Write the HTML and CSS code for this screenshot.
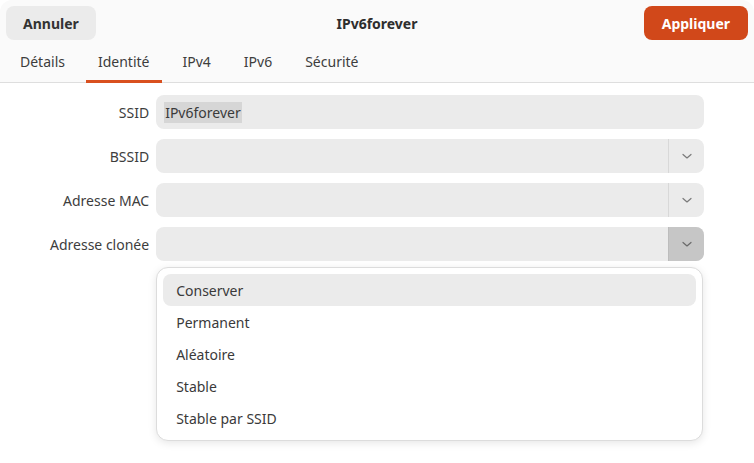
FILE: index.html
```html
<!DOCTYPE html>
<html lang="fr">
<head>
    <meta charset="UTF-8">
    <meta name="viewport" content="width=device-width, initial-scale=1.0">
    <title>IPv6forever</title>
    <link rel="stylesheet" href="styles.css">
</head>
<body>
    <div class="window">
        <div class="header">
            <div class="headerbar">
                <button class="btn btn-cancel">Annuler</button>
                <span class="title">IPv6forever</span>
                <button class="btn btn-apply">Appliquer</button>
            </div>
            <div class="tabs">
                <span class="tab">Détails</span>
                <span class="tab active">Identité</span>
                <span class="tab">IPv4</span>
                <span class="tab">IPv6</span>
                <span class="tab">Sécurité</span>
            </div>
        </div>

        <div class="form">
            <label class="label">SSID</label>
            <div class="field"><span class="selected">IPv6forever</span></div>

            <label class="label">BSSID</label>
            <div class="combo">
                <div class="combo-entry"></div>
                <div class="combo-btn">
                    <svg width="14" height="14" viewBox="0 0 14 14"><path d="M3 5.5 L7 9 L11 5.5" fill="none" stroke="#7a7a7a" stroke-width="1.2" stroke-linecap="round" stroke-linejoin="round"/></svg>
                </div>
            </div>

            <label class="label">Adresse MAC</label>
            <div class="combo">
                <div class="combo-entry"></div>
                <div class="combo-btn">
                    <svg width="14" height="14" viewBox="0 0 14 14"><path d="M3 5.5 L7 9 L11 5.5" fill="none" stroke="#7a7a7a" stroke-width="1.2" stroke-linecap="round" stroke-linejoin="round"/></svg>
                </div>
            </div>

            <label class="label">Adresse clonée</label>
            <div class="combo open">
                <div class="combo-entry"></div>
                <div class="combo-btn">
                    <svg width="14" height="14" viewBox="0 0 14 14"><path d="M3 5.5 L7 9 L11 5.5" fill="none" stroke="#6a6a6a" stroke-width="1.2" stroke-linecap="round" stroke-linejoin="round"/></svg>
                </div>
                <ul class="menu">
                    <li class="item hover">Conserver</li>
                    <li class="item">Permanent</li>
                    <li class="item">Aléatoire</li>
                    <li class="item">Stable</li>
                    <li class="item">Stable par SSID</li>
                </ul>
            </div>
        </div>
    </div>
</body>
</html>
```

FILE: styles.css
```css
body {
    margin: 0;
    background-color: #fff;
    font-family: "Noto Sans", "DejaVu Sans", sans-serif;
    font-size: 14px;
    color: #3a3a3a;
}
.window {
    width: 754px;
    height: 463px;
    background-color: #fff;
}
.header {
    background-color: #fafafa;
    border-bottom: 1px solid #dedede;
    border-radius: 12px 12px 0 0;
}
.headerbar {
    display: grid;
    grid-template-columns: 1fr auto 1fr;
    align-items: center;
    padding: 6px 6px 0 6px;
    height: 34px;
}
.btn {
    font-family: inherit;
    font-size: 14px;
    font-weight: bold;
    height: 34px;
    padding: 0 17px;
    border: none;
    border-radius: 8px;
    background-color: #ebebeb;
    color: #333;
}
.btn-cancel {
    justify-self: start;
}
.btn-apply {
    justify-self: end;
    padding: 0 18px;
    background-color: #d1481a;
    color: #fff;
}
.title {
    font-weight: bold;
    color: #2e2e2e;
}
.tabs {
    display: flex;
    gap: 9px;
    padding: 0 8px;
    height: 42px;
}
.tab {
    display: flex;
    align-items: center;
    padding: 3px 12px 0 12px;
    color: #3d3d3d;
    border-bottom: 3px solid transparent;
    margin-bottom: -1px;
}
.tab.active {
    border-bottom-color: #d9501f;
}
.form {
    display: grid;
    grid-template-columns: auto 1fr;
    column-gap: 7px;
    row-gap: 10px;
    padding: 12px 50px 0 50px;
    align-items: center;
}
.label {
    text-align: right;
    color: #3d3d3d;
}
.field {
    height: 34px;
    background-color: #ebebeb;
    border-radius: 8px;
    display: flex;
    align-items: center;
    padding-left: 8px;
}
.selected {
    background-color: #d6d6d6;
    color: #3a3a3a;
    padding: 1px 1px;
}
.combo {
    position: relative;
    display: flex;
    height: 34px;
    background-color: #ebebeb;
    border-radius: 8px;
}
.combo-entry {
    flex: 1;
}
.combo-btn {
    width: 35px;
    border-left: 1px solid #d8d8d8;
    border-radius: 0 8px 8px 0;
    display: flex;
    align-items: center;
    justify-content: center;
}
.combo.open .combo-btn {
    background-color: #c6c6c6;
    border-left-color: #bcbcbc;
}
.menu {
    position: absolute;
    top: 40px;
    left: 0;
    right: 1px;
    margin: 0;
    padding: 6px;
    list-style: none;
    background-color: #fff;
    border: 1px solid #dcdcdc;
    border-radius: 12px;
    box-shadow: 0 2px 8px rgba(0, 0, 0, 0.1);
}
.item {
    height: 32px;
    display: flex;
    align-items: center;
    padding-left: 13px;
    border-radius: 8px;
    color: #3a3a3a;
}
.item.hover {
    background-color: #ebebeb;
}
```
